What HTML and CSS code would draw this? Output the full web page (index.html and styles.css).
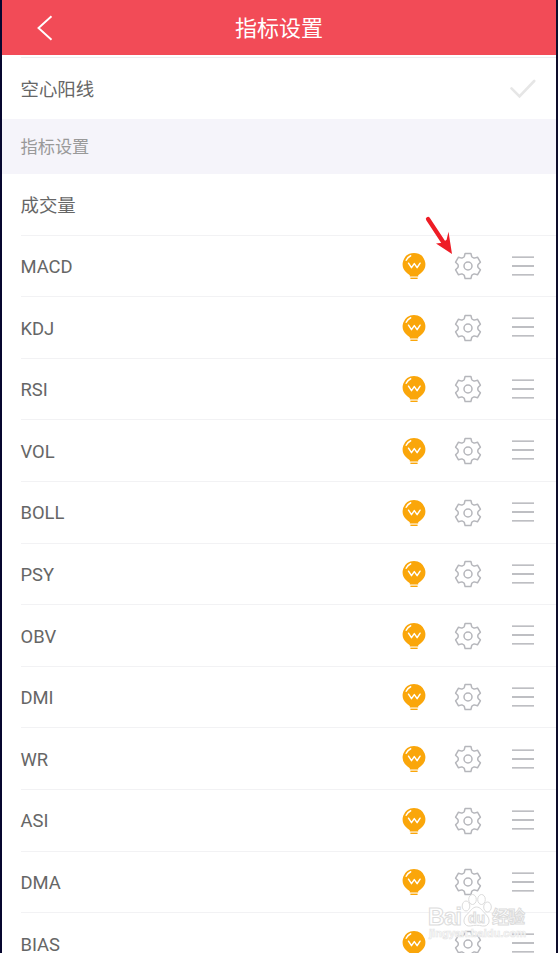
FILE: index.html
```html
<!DOCTYPE html>
<html lang="zh-CN">
<head>
    <meta charset="UTF-8">
    <meta name="viewport" content="width=device-width, initial-scale=1.0">
    <title>指标设置</title>
    <link rel="stylesheet" href="styles.css">
</head>

<body>

<!-- 图标定义 -->
<svg class="icon-defs" width="0" height="0">
    <symbol id="bulb" viewBox="0 0 24 28">
        <path d="M12 .9a11.3 11.3 0 0 1 6.8 20.3l-2.6 2v1.2H7.8v-1.2l-2.6-2A11.3 11.3 0 0 1 12 .9z" fill="#faa60a"/>
        <path d="M8.4 26.3h7.2" stroke="#faa60a" stroke-width="1.4"/>
        <path d="M4.2 8.3a9.5 9.5 0 0 1 4.5-4.5" fill="none" stroke="#fff" stroke-width="1.5" stroke-linecap="round"/>
        <path d="M6.5 11.2l3 4.4 2.8-4 2.8 4 3-4.4" fill="none" stroke="#fff" stroke-width="1.5" stroke-linejoin="round" stroke-linecap="round"/>
    </symbol>
    <symbol id="gear" viewBox="-14 -14 28 28">
        <g fill="none" stroke="#b5b6bb" stroke-width="1.5" stroke-linejoin="round">
            <path d="M-2.9-12.6H2.9L3.7-9.5Q4-8.6 5.6-8.1L6.4-7.9 9.5-8.8 12.4-3.8 10.1-1.5Q9.4 0 10.1 1.5L12.4 3.8 9.5 8.8 6.4 7.9 5.6 8.1Q4 8.6 3.7 9.5L2.9 12.6H-2.9L-3.7 9.5Q-4 8.6-5.6 8.1L-6.4 7.9-9.5 8.8-12.4 3.8-10.1 1.5Q-9.4 0-10.1-1.5L-12.4-3.8-9.5-8.8-6.4-7.9-5.6-8.1Q-4-8.6-3.7-9.5z"/>
            <circle r="4"/>
        </g>
    </symbol>
    <symbol id="menu" viewBox="0 0 22 20">
        <path d="M0 1.2h22M0 10h22M0 18.8h22" stroke="#a9aab0" stroke-width="1.3"/>
    </symbol>
</svg>

<!-- 顶部标题栏 -->
<header class="header">
    <svg class="back" width="16" height="26" viewBox="0 0 16 26">
        <path d="M14.5 1.2L1.5 13l13 11.8" fill="none" stroke="#fff" stroke-width="1.9"/>
    </svg>
    <h1>指标设置</h1>
</header>

<div class="option">
    <span>空心阳线</span>
    <svg width="26" height="20" viewBox="0 0 26 20">
        <path d="M1.5 9.3l8 8L24.2 2" fill="none" stroke="#e6e6e6" stroke-width="2.6" stroke-linecap="round"/>
    </svg>
</div>

<div class="section-title">指标设置</div>

<!-- 指标列表 -->
<ul class="list" id="list">
    <li class="row"><span>成交量</span></li>
</ul>

<!-- 红色箭头 -->
<svg class="arrow" width="32" height="42" viewBox="0 0 32 42">
    <path d="M7 6L22.5 29.5" stroke="#ee1c25" stroke-width="4.2" stroke-linecap="round"/>
    <path d="M31 41L15 30.6l6.4-.8 4.2-3 1.9-8z" fill="#ee1c25"/>
</svg>

<!-- 水印 -->
<svg class="watermark" width="110" height="60" viewBox="0 0 110 60">
    <g class="mark">
        <text x="7" y="35.5" font-size="23" textLength="34">Bai</text>
        <ellipse cx="45" cy="17" rx="3.8" ry="5"/>
        <ellipse cx="51.5" cy="10.5" rx="3.8" ry="5"/>
        <ellipse cx="60.5" cy="10.5" rx="3.8" ry="5"/>
        <ellipse cx="66.5" cy="18" rx="3.8" ry="5"/>
        <path d="M55.5 18c4 0 6 4 9 7 6 5 4 13-3 12-4-1-8-1-12 0-7 1-9-7-3-12 3-3 5-7 9-7z"/>
        <text class="du" x="47" y="34" font-size="14" textLength="17">du</text>
        <text class="cn" x="71" y="33.5" font-size="17" textLength="33">经验</text>
    </g>
    <text class="url" x="8" y="48" font-size="11" textLength="97">jingyan.baidu.com</text>
</svg>

<script>
    // 需要显示的指标名称
    const names = ["MACD", "KDJ", "RSI", "VOL", "BOLL", "PSY", "OBV", "DMI", "WR", "ASI", "DMA", "BIAS"];
    const list = document.getElementById("list");

    // 逐个添加指标行
    names.forEach(name => {
        list.insertAdjacentHTML("beforeend", `
            <li class="row">
                <span class="name">${name}</span>
                <div class="icons">
                    <svg width="24" height="28"><use href="#bulb"/></svg>
                    <svg width="28" height="28"><use href="#gear"/></svg>
                    <svg class="menu" width="22" height="20"><use href="#menu"/></svg>
                </div>
            </li>`);
    });
</script>

</body>
</html>
```
FILE: styles.css
```css
* {
    box-sizing: border-box;
}

/* 整个页面，左右为深色边框 */
body {
    margin: 0;
    height: 953px;
    overflow: hidden;
    position: relative;
    border-left: 2px solid #07072f;
    border-right: 2px solid #0d0d2b;
    background-color: #fff;
    color: #666;
    font-family: Roboto, "Noto Sans CJK SC", sans-serif;
    font-size: 18.4px;
}

.icon-defs {
    display: block;
}

/* 顶部标题栏 */
.header {
    display: grid;
    grid-template-columns: 84px 1fr 84px;
    align-items: center;
    height: 55px;
    background-color: #f24b57;
    color: #fff;
}

.header h1 {
    margin: 0;
    padding-bottom: 4px;
    font-size: 22px;
    font-weight: 400;
    text-align: center;
}

.back {
    margin-left: 35px;
}

.option {
    display: flex;
    justify-content: space-between;
    align-items: center;
    height: 62px;
    margin: 2px 0 0 18.5px;
    padding-right: 20px;
    border-top: 1px solid #ededf0;
}

.option span {
    padding-bottom: 2px;
}

/* 分组标题 */
.section-title {
    height: 55px;
    padding-left: 18.5px;
    background-color: #f5f4fa;
    color: #999;
    font-size: 17.2px;
    line-height: 56px;
}

.list {
    margin: 0;
    padding: 0 0 0 18.5px;
    list-style: none;
}

.row {
    display: flex;
    justify-content: space-between;
    align-items: center;
    height: 61.62px;
    padding-right: 22.2px;
    border-bottom: 1px solid #f2f2f4;
}

.name {
    padding-top: 1.2px;
}

/* 右侧图标 */
.icons {
    display: flex;
    align-items: center;
    padding-top: 0.5px;
}

.icons svg {
    margin-left: 28px;
}

.icons .menu {
    margin-left: 29.8px;
    margin-bottom: 1px;
}

/* 箭头和水印盖在列表上面 */
.arrow {
    position: absolute;
    top: 213px;
    left: 419px;
}

.watermark {
    position: absolute;
    top: 889px;
    left: 419px;
    font-family: "Liberation Sans", "Noto Sans CJK SC", sans-serif;
    font-weight: 700;
}

.mark {
    fill: rgba(255, 255, 255, 0.85);
    stroke: #dcdcdc;
    stroke-width: 1;
}

.mark .cn {
    font-family: "Noto Sans CJK SC", sans-serif;
}

.url {
    fill: rgba(255, 255, 255, 0.8);
    stroke: #e6e6e6;
    stroke-width: 0.7;
}
```
